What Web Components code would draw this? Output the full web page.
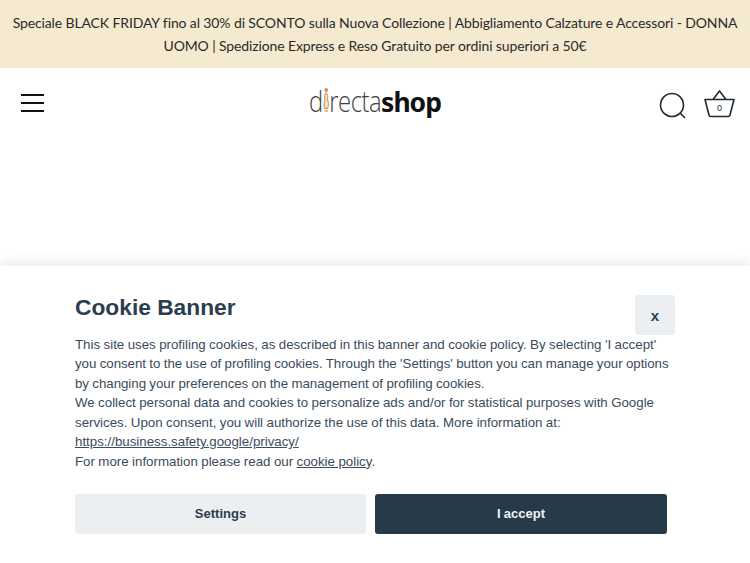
<!DOCTYPE html>
<html lang="it"><head><meta charset="utf-8"><title>directashop</title>
<style>
html,body{margin:0;padding:0;background:#fff}
body{width:750px;height:563px;overflow:hidden;position:relative}
</style></head><body>
<promo-bar>Speciale BLACK FRIDAY fino al 30% di SCONTO sulla Nuova Collezione | Abbigliamento Calzature e Accessori - DONNA UOMO | Spedizione Express e Reso Gratuito per ordini superiori a 50€</promo-bar>
<site-header></site-header>
<cookie-banner>
<span slot="title">Cookie Banner</span>
This site uses profiling cookies, as described in this banner and cookie policy. By selecting 'I accept' <span style="letter-spacing:-.04px">you consent to the use of profiling cookies. Through the 'Settings' button you can manage your options</span> <span style="letter-spacing:-.04px">by changing your preferences on the management of profiling cookies.</span><br>We collect personal data and cookies to personalize ads and/or for statistical purposes with Google services. Upon consent, you will authorize the use of this data. More information at: <a href="#" style="color:inherit">https://business.safety.google/privacy/</a><br>For more information please read our <a href="#" style="color:inherit">cookie policy</a>.
</cookie-banner>
<script>
function def(name,html){customElements.define(name,class extends HTMLElement{constructor(){super();this.attachShadow({mode:'open'}).innerHTML=html}})}
def('promo-bar',`<style>:host{display:block;box-sizing:border-box;height:68px;background:#f5ead0;color:#2a2a2a;font:14px/23px Lato,sans-serif;letter-spacing:-.12px;text-align:center;padding:11px 10px}</style><slot></slot>`);
def('site-logo',`<style>:host{display:flex;align-items:baseline;line-height:36px;color:#3c4044;margin-top:1px}
.w{display:inline-block;width:72px;white-space:nowrap}
.a{display:inline-block;font:300 29px/36px "Open Sans",sans-serif;letter-spacing:-.55px;transform:scaleX(.82);transform-origin:0 50%}
.b{font:700 26.5px/36px "Noto Sans",sans-serif;color:#111;letter-spacing:-1px}
.i{position:relative;color:#ecd6b8;display:inline-block;width:8px;text-align:center}
svg{position:absolute;left:0;top:5px}</style>
<span class="w"><span class="a">d<span class="i">i<svg width="8" height="24" viewBox="0 0 7 24" preserveAspectRatio="none" fill="none" stroke="#c9924f" stroke-width="1.2"><circle cx="3.5" cy="2" r="1.3" fill="#c9924f"/><path d="M3.5 5.5C1.5 6.5 1.5 9 2.2 11.5 1 14 1 17 2 20.5h3C6 17 6 14 4.8 11.5 5.5 9 5.5 6.5 3.5 5.5zM1.5 23h4"/></svg></span>recta</span></span><span class="b">shop</span>`);
def('site-header',`<style>:host{display:grid;grid-template-columns:1fr auto 1fr;align-items:center;height:70px;padding:0 15px;box-sizing:border-box}svg{display:block}.m{margin-left:6px}.r{display:flex;gap:17px;align-items:center;justify-content:flex-end;padding-top:2px}.s{margin-top:3px}</style>
<svg class="m" width="23" height="18" viewBox="0 0 23 18" fill="none" stroke="#111" stroke-width="2"><path d="M0 1h23M0 9h23M0 17h23"/></svg>
<site-logo></site-logo>
<div class="r"><svg class="s" width="28" height="28" viewBox="0 0 28 28" fill="none" stroke="#1f2a33" stroke-width="1.6"><circle cx="13" cy="13" r="11.5"/><path d="M21 21l5 5"/></svg>
<svg width="31" height="28" viewBox="0 0 31 28" fill="none" stroke="#1f2a33" stroke-width="1.6" stroke-linejoin="round"><path d="M1 9.5h29l-4 15.5a2 2 0 0 1-2 1.5H7a2 2 0 0 1-2-1.5zM9 9.5L15.5 1 22 9.5"/><text x="15.5" y="21" font-family="Liberation Sans,sans-serif" font-size="9" fill="#1f2a33" stroke="none" text-anchor="middle">0</text></svg></div>`);
def('ui-button',`<style>:host{display:flex;align-items:center;justify-content:center;height:40px;border-radius:3px;background:var(--bg,#ebeff2);color:var(--fg,#2b3d4f);font:700 var(--fs,13px) "Liberation Sans",Arial,sans-serif;box-sizing:border-box}</style><slot></slot>`);
def('cookie-banner',`<style>:host{position:absolute;left:0;right:0;top:266px;bottom:0;background:#fff;box-shadow:0 0 14px rgba(0,0,0,.14);color:#3a4b5c;font:13.3px/19.5px "Liberation Sans",Arial,sans-serif;word-spacing:-.28px;display:block}
.w{padding:29px 83px 0 75px;display:flex;flex-direction:column}
.t{display:flex;justify-content:space-between;align-items:flex-start;margin-right:-8px;height:40px}
h2{margin:-1px 0 0;font:700 22.75px/26px "Liberation Sans",Arial,sans-serif;color:#2b3d4f;word-spacing:0}
.x{width:40px;--fs:15px}
.body{margin:-.5px -3px 0 0}
.btns{display:grid;grid-template-columns:291px 292px;gap:9px;margin-top:22.5px}
.dark{--bg:#263a48;--fg:#f2f4f5}
</style><div class="w"><div class="t"><h2><slot name="title"></slot></h2><ui-button class="x">x</ui-button></div>
<div class="body"><slot></slot></div>
<div class="btns"><ui-button>Settings</ui-button><ui-button class="dark">I accept</ui-button></div></div>`);
</script>
</body></html>
